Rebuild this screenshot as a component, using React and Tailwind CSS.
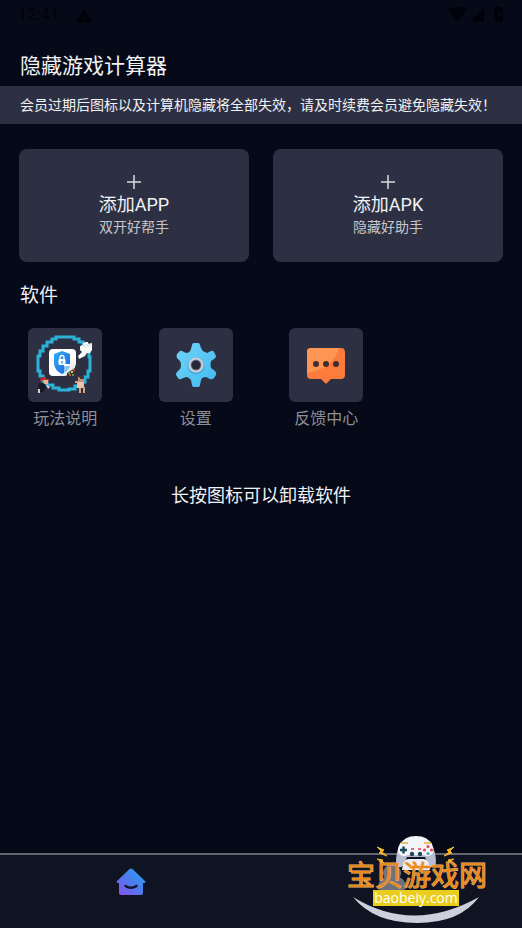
import React, { useState } from 'react';

const entries = [
  { id: 'app', title: '添加APP', desc: '双开好帮手' },
  { id: 'apk', title: '添加APK', desc: '隐藏好助手' },
];

const StatusBar = () => (
  <div className="h-[30px] px-[18px] flex items-center justify-between text-[#010209]">
    <div className="flex items-center gap-4">
      <span className="text-base leading-5 tracking-wide">12:41</span>
      <svg viewBox="0 0 16 15" className="w-4 h-[15px]">
        <path d="M8 0.5L16 14.5H0Z" fill="currentColor" />
        <path d="M8 5.5V10M8 11.2V12.8" stroke="#060918" strokeWidth="1.3" />
      </svg>
    </div>
    <svg viewBox="0 0 56 18" className="w-14 h-[18px]" fill="currentColor">
      <path d="M0 4C5.500 0 13.500 0 19 4L9.500 15.500Z" />
      <path d="M36 2V15.500H22Z" />
      <path d="M48.500 0H51V1H53.500Q55 1 55 2.500V14.500Q55 16 53.500 16H48Q46.500 16 46.500 14.500V2.500Q46.500 1 48.500 1Z" />
      <path d="M51.500 4L49 9H50.700V13L53 8H51.500Z" fill="#060918" />
    </svg>
  </div>
);

const GuideIcon = () => (
  <svg viewBox="0 0 74 74" className="w-full h-full">
    <defs>
      <linearGradient id="shield" x1="0" y1="0" x2="1" y2="1">
        <stop offset="0" stopColor="#35aef3" />
        <stop offset="1" stopColor="#1762dc" />
      </linearGradient>
      <linearGradient id="sheet" x1="0" y1="0" x2="1" y2="1">
        <stop offset="0.6" stopColor="#ffffff" />
        <stop offset="1" stopColor="#cfd5d5" />
      </linearGradient>
    </defs>
    <path
      d="M28 9H46V11H51V14H55V18H58V23H61V29H62V43H60V49H57V54H53V58H47V61H41V62H31V60H25V57H19V53H15V48H12V43H10V28H12V23H15V18H19V14H24V11H28Z"
      fill="none" stroke="#2cb2d9" strokeWidth="3"
    />
    <path d="M25 21H44Q48 21 48 25V36Q46 46 37 48H25Q21 48 21 44V25Q21 21 25 21Z" fill="url(#sheet)" />
    <path d="M34 23L42 26V36H36V45L34 46Q27 43 26 36V26Z" fill="url(#shield)" />
    <path d="M36 38H42Q41 42 36 45Z" fill="#8cc4f8" />
    <rect x="30.500" y="31" width="7" height="6" rx="1" fill="#fff" />
    <path d="M32 32V29.500Q32 27.500 34 27.500Q36 27.500 36 29.500V32" fill="none" stroke="#fff" strokeWidth="1.300" />
    <path d="M33.500 33H34.700V35.500H33.500Z" fill="#2679e2" />
    <path d="M39 45L47 40V48H39Z" fill="#38352e" />
    <path d="M40 44H42V46H40ZM44 46H46V48H44Z" fill="#4d9b50" />
    <path d="M43 43H45V45H43Z" fill="#ecb844" />
    <path d="M45 41H47V43H45ZM41 46H43V48H41Z" fill="#bd4e37" />
    <path d="M50 28L54 24L52 22V18L55 17V15L58 14H60V16L64 15V22L62 25H59L57 28L51 31Z" fill="#f7f8f8" />
    <path d="M55 17L58 20M58 16L61 19M60 15L63 18" stroke="#b9bdc1" strokeWidth="0.700" />
    <path d="M13 49H18V51H21V53H12V51H13Z" fill="#bc2d2d" />
    <path d="M15 52H20V56H16Z" fill="#e8b491" />
    <path d="M11 55L17 56L18 60L15 64H10V60Z" fill="#171924" />
    <path d="M18 56L22 59L20 61ZM10 61H12V65H10Z" fill="#d7d1ce" />
    <path d="M50 49H56V54H50Z" fill="#c3937d" />
    <path d="M51 48H56V51H52Z" fill="#453534" />
    <path d="M49 54H56V60H49Z" fill="#e9c3ae" />
    <path d="M47 53H50V55H47ZM51 60H53V65H51ZM55 59H57V65H55Z" fill="#d4a187" />
  </svg>
);

const SettingsIcon = () => (
  <svg viewBox="0 0 74 74" className="w-full h-full">
    <defs>
      <linearGradient id="gear" x1="0" y1="0" x2="1" y2="1">
        <stop offset="0" stopColor="#70d5fa" />
        <stop offset="1" stopColor="#43b9ef" />
      </linearGradient>
    </defs>
    <path
      d="M35 15H39Q41 15 41 17L42 20Q43 23 46 24L48 25L52 23Q54 22 55 24L57 28Q57 30 55 31L52 33Q51 37 52 40L56 43Q58 45 57 47L55 50Q53 52 51 51L47 49Q43 49 42 52L41 57Q41 59 38 59H35Q33 59 33 57L32 52Q30 49 27 49L22 51Q20 52 19 50L17 47Q17 45 18 44L21 41Q23 37 21 33L18 30Q17 28 18 26L20 24Q21 22 23 23L27 25Q31 25 32 21L33 17Q33 15 35 15Z"
      fill="url(#gear)"
    />
    <circle cx="37" cy="38" r="8.500" fill="#3495c6" opacity="0.500" />
    <circle cx="37" cy="37" r="7.500" fill="#cdd2dc" />
    <circle cx="37" cy="37" r="5.500" fill="#777a88" />
    <circle cx="37" cy="37" r="4.500" fill="#252736" />
  </svg>
);

const FeedbackIcon = () => (
  <svg viewBox="0 0 74 74" className="w-full h-full">
    <path d="M22 20H52Q56 20 56 24V47Q56 51 52 51H42L38 55Q37 56 36 55L32 51H22Q18 51 18 47V24Q18 20 22 20Z" fill="#fd7b3b" />
    <path d="M22 20H50Q44 41 18 45V24Q18 20 22 20Z" fill="#ff9552" />
    <circle cx="27" cy="36" r="3" fill="#442b2c" />
    <circle cx="37" cy="36" r="3" fill="#442b2c" />
    <circle cx="47" cy="36" r="3" fill="#442b2c" />
  </svg>
);

const tools = [
  { id: 'guide', label: '玩法说明', Icon: GuideIcon },
  { id: 'settings', label: '设置', Icon: SettingsIcon },
  { id: 'feedback', label: '反馈中心', Icon: FeedbackIcon },
];

const HomeIcon = () => (
  <svg viewBox="0 0 30 28" className="w-[30px] h-7">
    <defs>
      <linearGradient id="home" x1="0" y1="1" x2="1" y2="0">
        <stop offset="0" stopColor="#8b50ee" />
        <stop offset="0.550" stopColor="#487fed" />
        <stop offset="1" stopColor="#26a5f2" />
      </linearGradient>
    </defs>
    <path d="M13.500 1Q15 0 16.500 1L29 13Q30 15 28 15H27V25Q27 27 25 27H5Q3 27 3 25V15H2Q0 15 1 13Z" fill="url(#home)" />
    <path d="M9.500 18Q15 21.500 20.500 18" fill="none" stroke="#101424" strokeWidth="2.500" strokeLinecap="round" />
  </svg>
);

const UserIcon = () => (
  <svg viewBox="0 0 30 28" className="w-[30px] h-7" fill="#70727b">
    <circle cx="15" cy="9" r="9" />
    <path d="M1 23Q2 12 15 12Q28 12 29 23Q29 26 26 26H4Q1 26 1 23Z" />
  </svg>
);

const SiteMark = () => (
  <svg viewBox="0 0 144 96" className="absolute right-[33px] bottom-0 w-36 h-24 pointer-events-none">
    <path d="M8 65Q68 102 134 65Q115 91 72 91Q29 91 8 65Z" fill="#cdcfdc" />
    <path d="M55 13Q59 4 71 4Q83 4 87 13Z" fill="#f2f4f8" />
    <path d="M56 11Q60 9 64 12H78Q83 9 86 11Q91 20 91 30Q90 38 84 34L80 25H62L58 34Q52 38 51 30Q51 19 56 11Z" fill="#b6bdcf" />
    <path d="M56 10Q60 8 64 11H78Q83 8 86 10Q89 16 88 21Q84 26 79 23H63Q57 26 53 21Q52 16 56 10Z" fill="#f4f5f9" />
    <path d="M57 38Q58 27 63 27H79Q84 27 85 38Z" fill="#ebeef4" />
    <path d="M55 18H62M58.500 14.500V21.500" stroke="#194955" strokeWidth="2.500" />
    <circle cx="67" cy="22" r="2.200" fill="#254354" />
    <circle cx="75" cy="22" r="2.200" fill="#254354" />
    <path d="M66 17H69M73 17H76" stroke="#df3f5b" strokeWidth="1.500" />
    <circle cx="83" cy="14.500" r="1.600" fill="#e84956" />
    <circle cx="79.500" cy="18" r="1.600" fill="#e84956" />
    <circle cx="86.500" cy="18" r="1.600" fill="#e84956" />
    <circle cx="83" cy="21.500" r="1.600" fill="#39aebb" />
    <path d="M56 11L63 11M79 11L86 11" stroke="#e7ad32" strokeWidth="1.500" />
    <path d="M32 15L39 18L37 20L42 24L34 21L36 19ZM32 27L38 28L37 29L39 31L35 30L34 28Z" fill="#f0b323" stroke="#f0b323" strokeWidth="1" />
    <path d="M109 15L102 18L104 20L99 24L107 21L105 19ZM109 27L103 28L104 29L102 31L106 30L107 28Z" fill="#f0b323" stroke="#f0b323" strokeWidth="1" />
    <text
      x="2" y="54" fontSize="28" fontWeight="400" fill="#e98917" stroke="#f2b878" strokeWidth="1"
      style={{ paintOrder: 'stroke' }}
    >
      宝贝游戏网
    </text>
    <rect x="28" y="58" width="86" height="16" fill="#eace1d" />
    <text x="71" y="71" fontSize="14" fontWeight="500" textAnchor="middle" fill="#ffffff" className="font-['Open_Sans',sans-serif]">
      baobeiy.com
    </text>
  </svg>
);

const App = () => {
  const [tab, setTab] = useState('home');

  return (
    <div className="min-h-screen flex flex-col bg-[#060918] text-[#f1f2f4] font-[Roboto,'Noto_Sans_CJK_SC',sans-serif]">
      <StatusBar />
      <header className="px-5 pt-[22px] pb-1.5">
        <h1 className="text-[21px] leading-7">隐藏游戏计算器</h1>
      </header>
      <p className="bg-[#2d3042] px-5 py-[9px] text-sm leading-5 whitespace-nowrap overflow-hidden">
        会员过期后图标以及计算机隐藏将全部失效，请及时续费会员避免隐藏失效！
      </p>

      <main className="flex-1">
        <div className="grid grid-cols-2 gap-6 px-[19px] pt-[25px]">
          {entries.map(item => (
            <button key={item.id} type="button" className="h-[113px] rounded-lg bg-[#2d3042] flex flex-col items-center justify-center">
              <svg viewBox="0 0 14 14" className="w-3.5 h-3.5 mb-1">
                <path d="M7 0V14M0 7H14" stroke="#d9dade" strokeWidth="1.500" />
              </svg>
              <span className="text-lg leading-6">{item.title}</span>
              <span className="text-sm leading-5 text-[#c5c6cc]">{item.desc}</span>
            </button>
          ))}
        </div>

        <h2 className="px-5 pt-5 text-[19px] leading-7">软件</h2>
        <div className="grid grid-cols-4 pt-[18px]">
          {tools.map(({ id, label, Icon }) => (
            <button key={id} type="button" className="flex flex-col items-center gap-[5px]">
              <span className="block size-[74px] rounded-md bg-[#2d3042] overflow-hidden">
                <Icon />
              </span>
              <span className="text-base leading-6 text-[#8c8e96]">{label}</span>
            </button>
          ))}
        </div>

        <p className="pt-[51px] text-center text-lg leading-7">长按图标可以卸载软件</p>
      </main>

      <nav className="relative h-[75px] border-t-2 border-[#63656f] bg-[#101321] grid grid-cols-2">
        <button type="button" aria-label="首页" aria-pressed={tab === 'home'} onClick={() => setTab('home')} className="flex justify-center pt-[13px]">
          <HomeIcon />
        </button>
        <button type="button" aria-label="我的" aria-pressed={tab === 'mine'} onClick={() => setTab('mine')} className="flex justify-center pt-[9px]">
          <UserIcon />
        </button>
        <SiteMark />
      </nav>
    </div>
  );
};

export default App;
